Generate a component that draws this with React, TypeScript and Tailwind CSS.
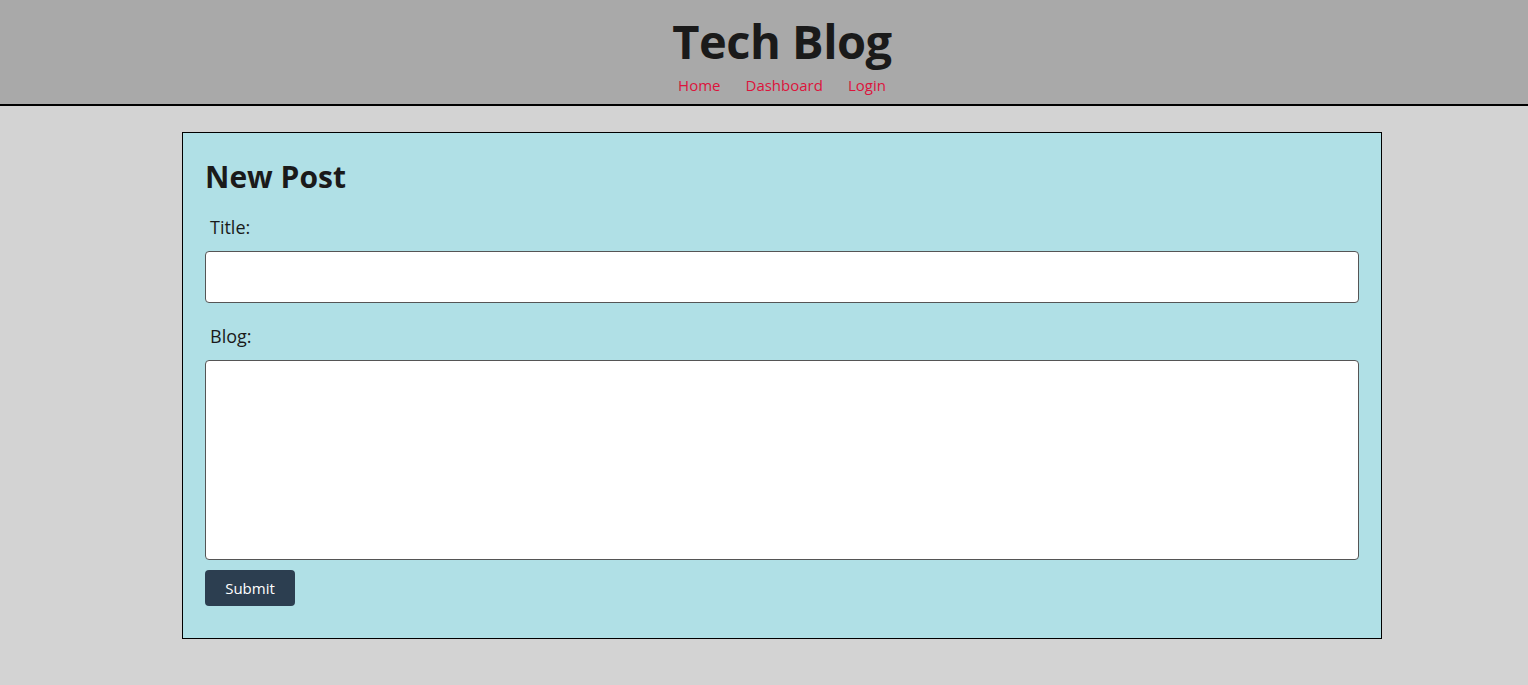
export default function App() {
  return (
    <div
      className="min-h-screen bg-[#d3d3d3] text-[#1a1a1a]"
      style={{ fontFamily: '"Open Sans", "Noto Sans", sans-serif' }}
    >
      {/* HEADER */}
      <header className="h-[106px] bg-[#a9a9a9] border-b-2 border-black pl-[36px]">
        <div className="flex flex-col items-center">
          <h1 className="text-[47px] font-bold leading-none mt-[18px] tracking-[-0.5px]">
            Tech Blog
          </h1>
          <nav className="flex gap-[25px] mt-[13px] text-[15px] leading-none text-[#dc143c]">
            <a href="#">Home</a>
            <a href="#">Dashboard</a>
            <a href="#">Login</a>
          </nav>
        </div>
      </header>

      {/* FORM */}
      <main className="pl-[36px] pt-[26px] pb-[46px]">
        <section className="mx-auto w-[1200px] bg-[#b0e0e6] border border-black px-[22px] pt-[29px] pb-[32px]">
          <h2 className="text-[30px] font-bold leading-none">New Post</h2>
          <form className="mt-[26px] flex flex-col">
            <label className="ml-[5px] text-[18px] leading-none">Title:</label>
            <input
              type="text"
              className="mt-[15px] h-[52px] w-full bg-white border border-[#555] rounded-[4px]"
            />
            <label className="ml-[5px] mt-[24px] text-[18px] leading-none">Blog:</label>
            <textarea className="mt-[15px] h-[200px] w-full bg-white border border-[#555] rounded-[4px] resize-none" />
            <div className="mt-[10px]">
              <button
                type="button"
                className="h-[36px] w-[90px] bg-[#2c3e50] text-white text-[15px] rounded-[4px]"
              >
                Submit
              </button>
            </div>
          </form>
        </section>
      </main>
    </div>
  );
}
